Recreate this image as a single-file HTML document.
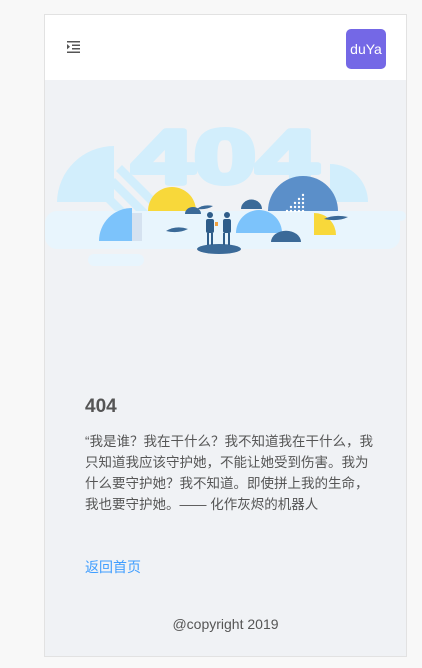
<!DOCTYPE html><html><head><meta charset="utf-8"><style>
body{margin:0;background:#f8f8f8;width:422px;height:668px;overflow:hidden;font-family:"Liberation Sans","Noto Sans CJK SC",sans-serif}
.card{position:absolute;left:44px;top:14px;width:361px;height:641px;border:1px solid #e2e2e2;background:#f0f2f5}
.hdr{position:absolute;left:0;top:0;width:361px;height:65px;background:#fff}
.av{position:absolute;left:301px;top:14px;width:40px;height:40px;border-radius:5px;background:#7468e6;color:#fff;font-size:14px;line-height:40px;text-align:center}
.t{position:absolute;left:40px;color:#555}
</style></head><body>
<div class="card">
<div class="hdr">
<svg style="position:absolute;left:22px;top:26px" width="14" height="12" viewBox="0 0 14 12"><g fill="#555"><rect x="0" y="0" width="13" height="1.5"/><rect x="5" y="3.5" width="8" height="1.5"/><rect x="5" y="7" width="8" height="1.5"/><rect x="0" y="10.5" width="13" height="1.5"/><path d="M0 3L3 5.7L0 8.4Z"/></g></svg>
<div class="av">duYa</div>
</div>
<svg style="position:absolute;left:0;top:86px" width="361" height="170" viewBox="44 100 361 170">
<path d="M56 201A57 57 0 0 1 113 145V201Z" fill="#d2eefc"/>
<path d="M329 163A38 38 0 0 1 367 201H329Z" fill="#d2eefc"/>
<g fill="#d2eefc"><path d="M115 170l6-6 40 40-6 6z"/><path d="M108 183l6-6 40 40-6 6z"/><path d="M100 196l6-6 40 40-6 6z"/></g>
<text x="131" y="182" textLength="186" lengthAdjust="spacingAndGlyphs" font-family="Liberation Sans" font-weight="bold" font-size="76" fill="#d2eefc" stroke="#d2eefc" stroke-width="5" stroke-linejoin="round">404</text>
<rect x="44" y="210" width="355" height="38" rx="12" fill="#e8f5fd"/>
<rect x="370" y="210" width="35" height="10" rx="5" fill="#e8f5fd"/>
<rect x="87" y="253" width="56" height="12" rx="6" fill="#e8f5fd"/>
<path d="M147 210A24 24 0 0 1 195 210Z" fill="#f8d83a"/>
<path d="M267 210A35 35 0 0 1 337 210Z" fill="#5b8fc9"/>
<g fill="#fff"><circle cx="302" cy="194" r="1.2"/><circle cx="298" cy="198" r="1.2"/><circle cx="302" cy="198" r="1.2"/><circle cx="294" cy="202" r="1.2"/><circle cx="298" cy="202" r="1.2"/><circle cx="302" cy="202" r="1.2"/><circle cx="290" cy="206" r="1.2"/><circle cx="294" cy="206" r="1.2"/><circle cx="298" cy="206" r="1.2"/><circle cx="302" cy="206" r="1.2"/><circle cx="286" cy="210" r="1.2"/><circle cx="290" cy="210" r="1.2"/><circle cx="294" cy="210" r="1.2"/><circle cx="298" cy="210" r="1.2"/><circle cx="302" cy="210" r="1.2"/></g>
<path d="M313 212A22 22 0 0 1 335 234H313Z" fill="#f8d83a"/>
<path d="M235 232A23 23 0 0 1 281 232Z" fill="#7cc3fb"/>
<path d="M98 240A33 33 0 0 1 131 207V240Z" fill="#7cc3fb"/>
<rect x="131" y="212" width="10" height="28" fill="#d5e2f0"/>
<g fill="#3b6a98"><path d="M240 208A10 9 0 0 1 261 208Z"/><path d="M184 213A8 7 0 0 1 200 213Z"/><path d="M270 241A12 9 0 0 1 300 241Z"/><path d="M165 230q10-6 22-2q-10 5-22 2z"/><path d="M323 218q10-5 24-2q-10 5-24 2z"/><path d="M196 208q6-5 16-3q-6 4-16 3z"/><ellipse cx="218" cy="248" rx="22" ry="5"/></g>
<g fill="#2f5d8a"><rect x="205" y="218" width="8" height="14" rx="2"/><circle cx="209" cy="214" r="3"/><rect x="206" y="232" width="2" height="12"/><rect x="210" y="232" width="2" height="12"/><rect x="222" y="218" width="8" height="14" rx="2"/><circle cx="226" cy="214" r="3"/><rect x="222" y="232" width="2" height="12"/><rect x="227" y="232" width="2" height="12"/></g>
<rect x="214" y="221" width="3" height="4" fill="#f0a040"/>
</svg>
<div class="t" style="top:381px;font-size:19px;font-weight:bold;">404</div>
<div class="t" style="top:416px;font-size:13.5px;line-height:21px;width:330px;white-space:nowrap">“我是谁？我在干什么？我不知道我在干什么，我<br>只知道我应该守护她，不能让她受到伤害。我为<br>什么要守护她？我不知道。即使拼上我的生命，<br>我也要守护她。—— 化作灰烬的机器人</div>
<div class="t" style="top:542px;font-size:14px;color:#409eff;">返回首页</div>
<div style="position:absolute;left:0;width:361px;top:601px;text-align:center;font-size:14px;color:#555">@copyright 2019</div>
</div>
</body></html>
